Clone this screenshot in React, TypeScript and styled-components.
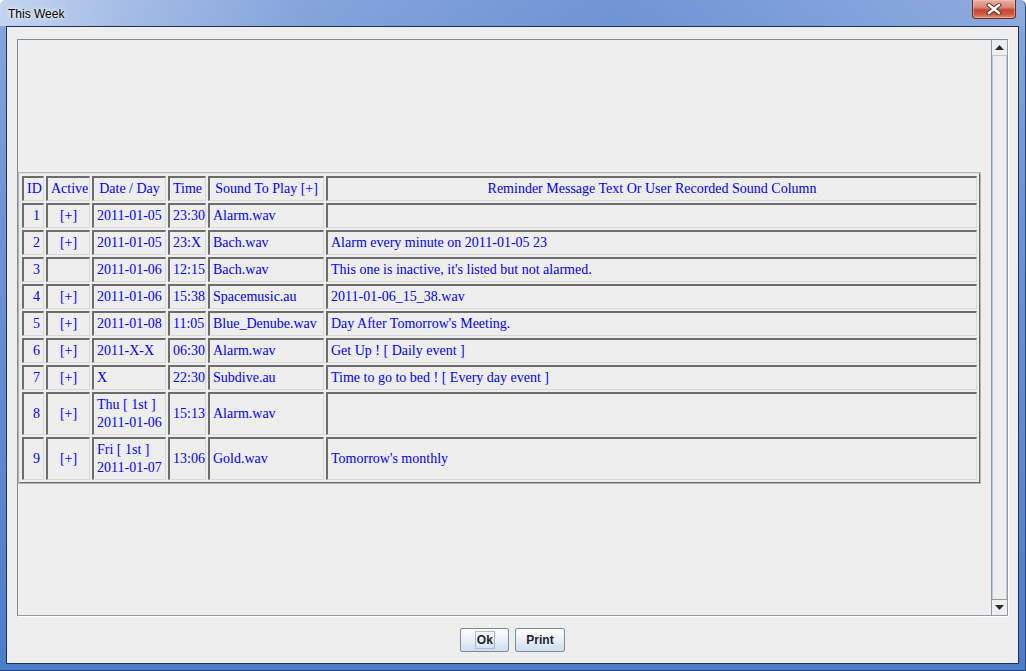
import React from "react";
import styled, { createGlobalStyle } from "styled-components";

type Row = {
  id: string;
  active: boolean;
  date: string[];
  time: string;
  sound: string;
  text: string;
};

const rows: Row[] = [
  { id: "1", active: true, date: ["2011-01-05"], time: "23:30", sound: "Alarm.wav", text: "" },
  { id: "2", active: true, date: ["2011-01-05"], time: "23:X", sound: "Bach.wav", text: "Alarm every minute on 2011-01-05 23" },
  { id: "3", active: false, date: ["2011-01-06"], time: "12:15", sound: "Bach.wav", text: "This one is inactive, it's listed but not alarmed." },
  { id: "4", active: true, date: ["2011-01-06"], time: "15:38", sound: "Spacemusic.au", text: "2011-01-06_15_38.wav" },
  { id: "5", active: true, date: ["2011-01-08"], time: "11:05", sound: "Blue_Denube.wav", text: "Day After Tomorrow's Meeting." },
  { id: "6", active: true, date: ["2011-X-X"], time: "06:30", sound: "Alarm.wav", text: "Get Up ! [ Daily event ]" },
  { id: "7", active: true, date: ["X"], time: "22:30", sound: "Subdive.au", text: "Time to go to bed ! [ Every day event ]" },
  { id: "8", active: true, date: ["Thu [ 1st ]", "2011-01-06"], time: "15:13", sound: "Alarm.wav", text: "" },
  { id: "9", active: true, date: ["Fri [ 1st ]", "2011-01-07"], time: "13:06", sound: "Gold.wav", text: "Tomorrow's monthly" },
];

const columns = [22, 44, 74, 38, 116];

const App: React.FC = () => {
  return (
    <>
      <GlobalStyle />
      <Window>
        <TitleBar>
          <Title>This Week</Title>
          <CloseButton>
            <svg width="18" height="12" viewBox="0 0 18 12">
              <path d="M4 2 L14 10 M14 2 L4 10" stroke="#4a2a28" strokeWidth="4.2" strokeLinecap="square" />
              <path d="M4 2 L14 10 M14 2 L4 10" stroke="#ffffff" strokeWidth="2.4" strokeLinecap="square" />
            </svg>
          </CloseButton>
        </TitleBar>
        <Client>
          <ScrollPane>
            <Viewport>
              <Table>
                <colgroup>
                  {columns.map((w, i) => (
                    <col key={i} style={{ width: w }} />
                  ))}
                  <col />
                </colgroup>
                <thead>
                  <tr>
                    <Cell as="th" $align="center">ID</Cell>
                    <Cell as="th" $align="center">Active</Cell>
                    <Cell as="th" $align="center">Date / Day</Cell>
                    <Cell as="th" $align="center">Time</Cell>
                    <Cell as="th" $align="center">Sound To Play [+]</Cell>
                    <Cell as="th" $align="center">Reminder Message Text Or User Recorded Sound Column</Cell>
                  </tr>
                </thead>
                <tbody>
                  {rows.map((r) => (
                    <tr key={r.id}>
                      <Cell $align="right">{r.id}</Cell>
                      <Cell $align="center">{r.active ? "[+]" : ""}</Cell>
                      <Cell>
                        {r.date.map((d) => (
                          <div key={d}>{d}</div>
                        ))}
                      </Cell>
                      <Cell>{r.time}</Cell>
                      <Cell>{r.sound}</Cell>
                      <Cell>{r.text}</Cell>
                    </tr>
                  ))}
                </tbody>
              </Table>
            </Viewport>
            <ScrollBar>
              <ArrowButton $down={false}>
                <svg width="9" height="5" viewBox="0 0 9 5">
                  <path d="M0 5 L4.5 0 L9 5 Z" fill="#2b2b2b" />
                </svg>
              </ArrowButton>
              <Thumb />
              <ArrowButton $down>
                <svg width="9" height="5" viewBox="0 0 9 5">
                  <path d="M0 0 L4.5 5 L9 0 Z" fill="#2b2b2b" />
                </svg>
              </ArrowButton>
            </ScrollBar>
          </ScrollPane>
          <ButtonBar>
            <Button>
              <Focus>Ok</Focus>
            </Button>
            <Button>Print</Button>
          </ButtonBar>
        </Client>
      </Window>
    </>
  );
};

export default App;

const GlobalStyle = createGlobalStyle`
  html, body {
    margin: 0;
    padding: 0;
    overflow: hidden;
    background: #ffffff;
  }
`;

const Window = styled.div`
  width: 1026px;
  height: 671px;
  box-sizing: border-box;
  display: flex;
  flex-direction: column;
  padding: 0 6px 6px 6px;
  background: linear-gradient(180deg, #88a7dc 0%, #6f95d5 30%, #4e7cca 100%);
  border-right: 1px solid #2a4878;
  border-bottom: 1px solid #2a4878;
  border-radius: 6px 6px 0 0;
  overflow: hidden;
  position: relative;
  &::before {
    content: "";
    position: absolute;
    inset: 0 0 auto 0;
    height: 26px;
    background: linear-gradient(
      90deg,
      rgba(215, 228, 246, 0.75) 0%,
      rgba(190, 208, 238, 0.55) 12%,
      rgba(120, 155, 215, 0.2) 30%,
      rgba(70, 115, 200, 0.35) 60%,
      rgba(150, 180, 228, 0.4) 100%
    );
    pointer-events: none;
  }
`;

const TitleBar = styled.div`
  height: 26px;
  display: flex;
  justify-content: space-between;
  align-items: flex-start;
  padding-left: 2px;
  padding-right: 3px;
  position: relative;
  z-index: 1;
`;

const Title = styled.span`
  font-family: "Liberation Sans", Arial, sans-serif;
  font-size: 12px;
  color: #000;
  line-height: 28px;
  text-shadow: 0 0 6px rgba(255, 255, 255, 0.9), 0 0 3px rgba(255, 255, 255, 0.9);
`;

const CloseButton = styled.div`
  width: 44px;
  height: 19px;
  box-sizing: border-box;
  display: flex;
  align-items: center;
  justify-content: center;
  border: 1px solid #6a2a22;
  border-top: none;
  border-radius: 0 0 4px 4px;
  background: linear-gradient(180deg, #eab0a2 0%, #dc8876 40%, #c64632 55%, #cf5a42 80%, #e09478 100%);
  box-shadow: inset 0 0 0 1px rgba(255, 200, 190, 0.45);
`;

const Client = styled.div`
  flex: 1;
  display: flex;
  flex-direction: column;
  background: #eeeeee;
  border: 1px solid #1f3256;
  padding: 12px 10px 0 10px;
  min-height: 0;
`;

const ScrollPane = styled.div`
  height: 577px;
  box-sizing: border-box;
  display: flex;
  border: 1px solid #7f8b98;
  border-right-color: #8f9aa6;
  border-bottom-color: #8f9aa6;
  box-shadow: 1px 1px 0 #ffffff;
`;

const Viewport = styled.div`
  flex: 1;
  display: flex;
  align-items: center;
  padding-left: 1px;
`;

const Table = styled.table`
  width: 961px;
  table-layout: fixed;
  border-collapse: separate;
  border-spacing: 2px;
  border-top: 1px solid #e4e4e4;
  border-left: 1px solid #e4e4e4;
  border-right: 1px solid #6a6a6a;
  border-bottom: 1px solid #6a6a6a;
  box-shadow: 0 0 0 1px #b4b4b4;
`;

const Cell = styled.td<{ $align?: "left" | "center" | "right" }>`
  font-family: "Liberation Serif", "Times New Roman", serif;
  font-size: 14px;
  font-weight: normal;
  color: #0000ff;
  line-height: 18px;
  text-align: ${(p) => p.$align ?? "left"};
  vertical-align: middle;
  padding: 2px 3px;
  border-top: 2px solid #6c6c6c;
  border-left: 2px solid #6c6c6c;
  border-right: 1px solid #d8d8d8;
  border-bottom: 1px solid #d8d8d8;
  white-space: nowrap;
  overflow: hidden;
`;

const ScrollBar = styled.div`
  width: 15px;
  display: flex;
  flex-direction: column;
  border-left: 1px solid #8c98a6;
`;

const ArrowButton = styled.div<{ $down: boolean }>`
  height: 16px;
  box-sizing: border-box;
  display: flex;
  align-items: center;
  justify-content: center;
  background: #eeeeee;
  border-top: ${(p) => (p.$down ? "1px solid #8c98a6" : "none")};
  border-bottom: ${(p) => (p.$down ? "none" : "1px solid #b8c8dc")};
`;

const Thumb = styled.div`
  flex: 1;
  background: #eeeeee;
  border-left: 1px solid #b8cadf;
  border-right: 1px solid #b8cadf;
`;

const ButtonBar = styled.div`
  flex: 1;
  display: flex;
  justify-content: center;
  align-items: center;
  gap: 6px;
`;

const Button = styled.div`
  height: 24px;
  box-sizing: border-box;
  padding: 0 10px;
  display: flex;
  align-items: center;
  justify-content: center;
  min-width: 49px;
  border: 1px solid #7a8a9c;
  border-radius: 2px;
  background: linear-gradient(180deg, #ffffff 0%, #eef3f9 40%, #cfddee 100%);
  font-family: "Liberation Sans", Arial, sans-serif;
  font-size: 12px;
  font-weight: bold;
  color: #1d2430;
`;

const Focus = styled.span`
  border: 1px solid #a9bdd8;
  padding: 1px 1px;
  line-height: 14px;
`;
